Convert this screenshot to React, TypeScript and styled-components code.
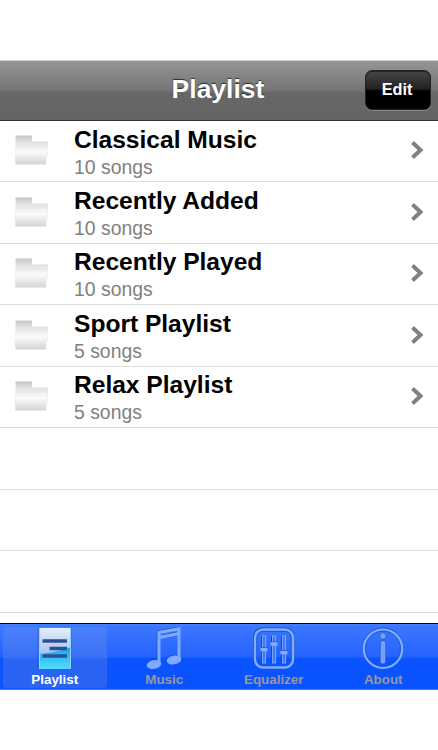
import React from "react";
import styled, { createGlobalStyle } from "styled-components";

const GlobalStyle = createGlobalStyle`
  * { box-sizing: border-box; }
  body { margin: 0; background: #fff; font-family: "Liberation Sans", Arial, Helvetica, sans-serif; }
  svg { display: block; flex: none; }
`;

const Screen = styled.div`
  width: 438px;
  height: 750px;
  padding: 60px 0;
  display: flex;
  flex-direction: column;
  background: #fff;
  overflow: hidden;
`;

const NavBar = styled.header`
  height: 61px;
  flex: none;
  display: grid;
  grid-template-columns: 1fr auto 1fr;
  align-items: center;
  padding: 0 7px 1px 5px;
  border-top: 1px solid #d0d0d0;
  border-bottom: 1px solid #333;
  background: linear-gradient(#959595 0, #757575 29px, #676767 32px, #646464 100%);
`;

const Title = styled.h1`
  grid-column: 2;
  margin: 0 0 3px;
  font-size: 26.5px;
  line-height: 30px;
  color: #fff;
  text-shadow: 0 -1px 1px rgba(0, 0, 0, 0.65);
`;

const EditButton = styled.button`
  justify-self: end;
  width: 66px;
  height: 40px;
  padding: 0 2px 1px 0;
  border: 1px solid #222;
  border-radius: 7px;
  background: linear-gradient(#484848 0, #202020 18px, #000 20px);
  box-shadow: 0 1px 0 #858585, inset 0 1px 1px #222;
  font: bold 16.3px "Liberation Sans", Arial, sans-serif;
  color: #fff;
`;

const List = styled.ul`
  flex: 1;
  min-height: 0;
  margin: 0;
  padding: 0;
  list-style: none;
  overflow: hidden;
`;

const Row = styled.li`
  height: 61.57px;
  display: flex;
  align-items: center;
  padding: 0 14px 0 14px;
  border-bottom: 1px solid #dedede;

  &:first-child {
    height: 61px;
  }

  > svg {
    position: relative;
    top: -0.6px;
  }
`;

const RowText = styled.div`
  flex: 1;
  padding: 2px 0 0 24px;
`;

const Name = styled.div`
  font-size: 24.6px;
  font-weight: bold;
  line-height: 28px;
  letter-spacing: -0.02px;
  color: #000;
`;

const Count = styled.div`
  margin-top: 1px;
  font-size: 19.4px;
  line-height: 24px;
  color: #7f7f7f;
`;

const TabBar = styled.nav`
  height: 67px;
  flex: none;
  display: grid;
  grid-template-columns: repeat(4, 1fr);
  border-top: 1px solid #000;
  border-bottom: 1px solid #4482ff;
  background: linear-gradient(#4483ff 0, #3c77ff 2px, #2563ff 33px, #0b53ff 34px, #0b53ff 100%);
`;

const Tab = styled.a<{ $active?: boolean }>`
  margin: 3px 3px 2px;
  display: flex;
  flex-direction: column;
  align-items: center;
  border-radius: 4px;
  font-size: 13.4px;
  font-weight: bold;
  line-height: 16px;
  color: ${(p) => (p.$active ? "#fff" : "#9698a2")};
  background: ${(p) => (p.$active ? "linear-gradient(#4c80fb, #396ff6 31px, #2964f2 32px, #2964f2)" : "none")};
`;

const Label = styled.span`
  margin-top: 1px;
`;

function FolderIcon() {
  return (
    <svg width="36" height="34" viewBox="0 0 36 34">
      <defs>
        <linearGradient id="folderBack" x2="0" y2="1">
          <stop stopColor="#c6c6c6" /><stop offset=".4" stopColor="#e8e8e8" /><stop offset="1" stopColor="#f2f2f2" />
        </linearGradient>
        <linearGradient id="folderFront" x2="0" y2="1">
          <stop stopColor="#f0f0f0" /><stop offset=".3" stopColor="#fafafa" /><stop offset="1" stopColor="#d4d4d4" />
        </linearGradient>
      </defs>
      <path d="M1.500 2.500h16.500v6h16v15H1.500z" fill="url(#folderBack)" />
      <path d="M0 14h33.500l-1.500 17.500H1.500z" fill="url(#folderFront)" />
    </svg>
  );
}

function Chevron() {
  return (
    <svg width="14" height="20" viewBox="0 0 14 20">
      <path d="M2.500 2.500 10.500 10l-8 7.500" fill="none" stroke="#808080" strokeWidth="4" />
    </svg>
  );
}

function PlaylistIcon() {
  return (
    <svg width="46" height="44" viewBox="0 0 46 44">
      <defs>
        <linearGradient id="pageTop" x2="0" y2="1"><stop stopColor="#e5edfb" /><stop offset="1" stopColor="#86adeb" /></linearGradient>
        <linearGradient id="pageBottom" x2="0" y2="1"><stop stopColor="#14a5e8" /><stop offset="1" stopColor="#52dcff" /></linearGradient>
      </defs>
      <path d="M5.500 1h34v41h-34z" fill="#235ad0" opacity=".5" />
      <path d="M7 1h32v41H7z" fill="url(#pageTop)" />
      <path d="M7 27c8-1 22-3 32-7v22H7z" fill="url(#pageBottom)" />
      <path d="M7.500 1v41M38.500 1v41" stroke="#92d5f8" />
      <path d="M10.500 14H35M17.500 21.500H35M10.500 29H35" stroke="#2c5095" strokeWidth="3.600" />
    </svg>
  );
}

function MusicIcon() {
  return (
    <svg width="46" height="44" viewBox="0 0 46 44">
      <g fill="none" stroke="#1741a5" strokeWidth="1" opacity=".5">
        <path d="M16 34V4L38 0v29M19 9l17-4" />
        <ellipse cx="13" cy="36.500" rx="7" ry="4.600" transform="rotate(-10 13 36.500)" />
        <ellipse cx="33" cy="32.500" rx="7" ry="4.600" transform="rotate(-10 33 32.500)" />
      </g>
      <path d="M18 37V5.500L38 1.800V33M18 10.500l20-4" fill="none" stroke="#80aaff" strokeWidth="3" />
      <ellipse cx="13" cy="37.500" rx="7.400" ry="4.400" transform="rotate(-10 13 37.500)" fill="#80aaff" />
      <ellipse cx="33" cy="33" rx="7.400" ry="4.400" transform="rotate(-10 33 33)" fill="#80aaff" />
    </svg>
  );
}

function EqualizerIcon() {
  return (
    <svg width="46" height="44" viewBox="0 0 46 44">
      <rect x="3" y="1.500" width="39.500" height="39" rx="8" fill="none" stroke="#1748b5" strokeWidth="2" />
      <rect x="4" y="2.500" width="38" height="38" rx="8" fill="none" stroke="#80adff" strokeWidth="2.500" />
      <rect x="6" y="4.500" width="34" height="34" rx="6" fill="none" stroke="#245bca" />
      <g fill="#3e74e6" stroke="#7ba4f8" strokeWidth="1.200">
        <path d="M11.500 9h3v27h-3zM21.500 9h3v27h-3zM31.500 9h3v27h-3z" />
      </g>
      <path d="M10.500 9v27M20.500 9v27M30.500 9v27M10 20.500h7M20 15h7M30 23.500h7" stroke="#1748b5" fill="none" />
      <path d="M9.500 22.500h7M19.500 17h7M29.500 25.500h7" stroke="#83acff" strokeWidth="3.500" />
    </svg>
  );
}

function InfoIcon() {
  return (
    <svg width="46" height="44" viewBox="0 0 46 44">
      <circle cx="23" cy="21" r="20" fill="none" stroke="#164abb" />
      <circle cx="23" cy="21.700" r="19.200" fill="none" stroke="#80adff" strokeWidth="2.200" />
      <circle cx="23" cy="21.700" r="17.500" fill="none" stroke="#2255c4" strokeWidth=".8" />
      <circle cx="23" cy="9" r="3.200" fill="#73a0fa" stroke="#164abb" strokeWidth=".6" />
      <rect x="20.200" y="13.500" width="5.600" height="23.500" rx="2.800" fill="#73a0fa" stroke="#174cba" strokeWidth=".6" />
    </svg>
  );
}

const playlists: [string, string][] = [
  ["Classical Music", "10 songs"],
  ["Recently Added", "10 songs"],
  ["Recently Played", "10 songs"],
  ["Sport Playlist", "5 songs"],
  ["Relax Playlist", "5 songs"],
];

export default function App() {
  return (
    <>
      <GlobalStyle />
      <Screen>
        <NavBar>
          <Title>Playlist</Title>
          <EditButton>Edit</EditButton>
        </NavBar>
        <List>
          {playlists.map(([name, count]) => (
            <Row key={name}>
              <FolderIcon />
              <RowText>
                <Name>{name}</Name>
                <Count>{count}</Count>
              </RowText>
              <Chevron />
            </Row>
          ))}
          <Row /><Row /><Row />
        </List>
        <TabBar>
          <Tab $active><PlaylistIcon /><Label>Playlist</Label></Tab>
          <Tab><MusicIcon /><Label>Music</Label></Tab>
          <Tab><EqualizerIcon /><Label>Equalizer</Label></Tab>
          <Tab><InfoIcon /><Label>About</Label></Tab>
        </TabBar>
      </Screen>
    </>
  );
}
